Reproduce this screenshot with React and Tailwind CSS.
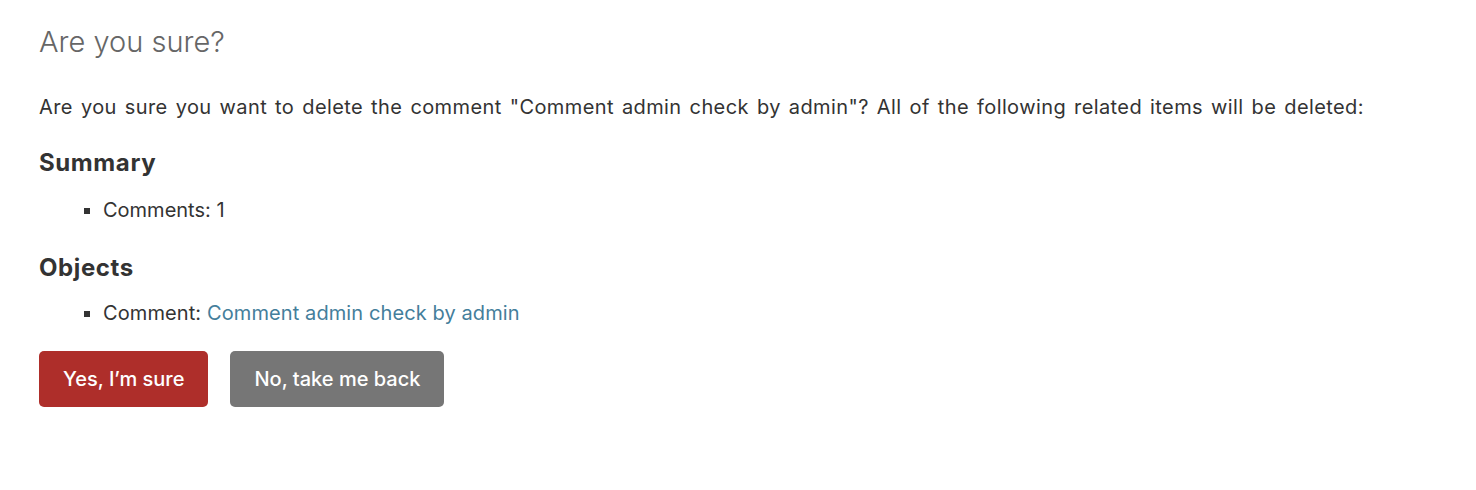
// Delete confirmation page, admin style
const App = () => {
  return (
    <div className="min-h-[490px] bg-white px-[39px] pt-[25px] text-[#333] font-['Inter','Liberation_Sans',sans-serif]">
      {/* Title */}
      <h1 className="text-[29px] leading-[34px] font-light text-[#666]">Are you sure?</h1>

      <p className="mt-[35px] text-[20px] leading-[26px] tracking-[0.02em] [word-spacing:2px]">
        Are you sure you want to delete the comment "Comment admin check by admin"? All of the following related items
        will be deleted:
      </p>

      {/* Summary */}
      <h2 className="mt-[29px] text-[24px] leading-[28px] font-bold tracking-[0.025em]">Summary</h2>
      <ul className="mt-[20px] list-[square] pl-[64px] text-[20px] leading-[26px]">
        <li>Comments: 1</li>
      </ul>

      {/* Objects */}
      <h2 className="mt-[31px] text-[24px] leading-[28px] font-bold tracking-[0.025em]">Objects</h2>
      <ul className="mt-[18px] list-[square] pl-[64px] text-[20px] leading-[26px] tracking-[0.005em]">
        <li>
          Comment:{" "}
          <a href="#" className="text-[#447e9b]">
            Comment admin check by admin
          </a>
        </li>
      </ul>

      {/* Actions */}
      <form className="mt-[25px] flex items-center gap-[22px]">
        <button
          type="button"
          className="h-[56px] rounded-[5px] bg-[#ae2e2a] px-[24px] text-[20px] font-medium text-white"
        >
          Yes, I’m sure
        </button>
        <a
          href="#"
          className="flex h-[56px] items-center rounded-[5px] bg-[#767676] px-[24px] text-[20px] font-medium text-white"
        >
          No, take me back
        </a>
      </form>
    </div>
  )
}

export default App
